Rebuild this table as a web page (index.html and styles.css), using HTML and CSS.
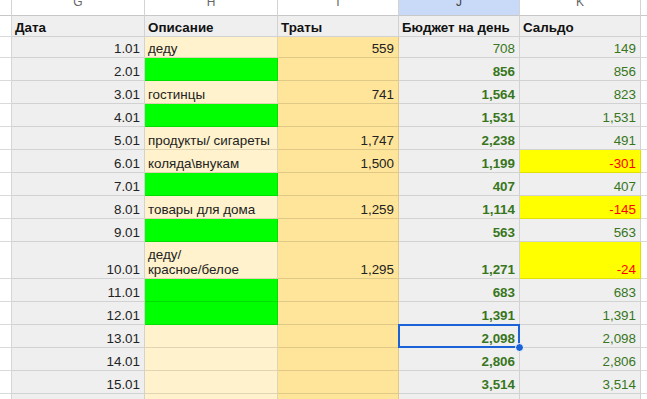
FILE: index.html
```
<!DOCTYPE html>
<html lang="ru">
<head>
<meta charset="utf-8">
<title>Бюджет</title>
<link rel="stylesheet" href="styles.css">
</head>
<body>
<div class="sheet">
  <div class="c colhead"></div>
  <div class="c colhead"><span>G</span></div>
  <div class="c colhead"><span>H</span></div>
  <div class="c colhead"><span>I</span></div>
  <div class="c colhead active"><span>J</span></div>
  <div class="c colhead"><span>K</span></div>
  <div class="c colhead end"></div>

  <div class="c edge"></div>
  <div class="c hdr">Дата</div>
  <div class="c hdr">Описание</div>
  <div class="c hdr">Траты</div>
  <div class="c hdr">Бюджет на день</div>
  <div class="c hdr">Сальдо</div>
  <div class="c edge end"></div>

  <div class="c edge"></div>
  <div class="c date">1.01</div>
  <div class="c desc">деду</div>
  <div class="c cost">559</div>
  <div class="c budget plain">708</div>
  <div class="c bal">149</div>
  <div class="c edge end"></div>

  <div class="c edge"></div>
  <div class="c date">2.01</div>
  <div class="c desc green"></div>
  <div class="c cost"></div>
  <div class="c budget">856</div>
  <div class="c bal">856</div>
  <div class="c edge end"></div>

  <div class="c edge"></div>
  <div class="c date">3.01</div>
  <div class="c desc">гостинцы</div>
  <div class="c cost">741</div>
  <div class="c budget">1,564</div>
  <div class="c bal">823</div>
  <div class="c edge end"></div>

  <div class="c edge"></div>
  <div class="c date">4.01</div>
  <div class="c desc green"></div>
  <div class="c cost"></div>
  <div class="c budget">1,531</div>
  <div class="c bal">1,531</div>
  <div class="c edge end"></div>

  <div class="c edge"></div>
  <div class="c date">5.01</div>
  <div class="c desc">продукты/ сигареты</div>
  <div class="c cost">1,747</div>
  <div class="c budget">2,238</div>
  <div class="c bal">491</div>
  <div class="c edge end"></div>

  <div class="c edge"></div>
  <div class="c date">6.01</div>
  <div class="c desc">коляда\внукам</div>
  <div class="c cost">1,500</div>
  <div class="c budget">1,199</div>
  <div class="c bal neg">-301</div>
  <div class="c edge end"></div>

  <div class="c edge"></div>
  <div class="c date">7.01</div>
  <div class="c desc green"></div>
  <div class="c cost"></div>
  <div class="c budget">407</div>
  <div class="c bal">407</div>
  <div class="c edge end"></div>

  <div class="c edge"></div>
  <div class="c date">8.01</div>
  <div class="c desc">товары для дома</div>
  <div class="c cost">1,259</div>
  <div class="c budget">1,114</div>
  <div class="c bal neg">-145</div>
  <div class="c edge end"></div>

  <div class="c edge"></div>
  <div class="c date">9.01</div>
  <div class="c desc green"></div>
  <div class="c cost"></div>
  <div class="c budget">563</div>
  <div class="c bal">563</div>
  <div class="c edge end"></div>

  <div class="c edge"></div>
  <div class="c date">10.01</div>
  <div class="c desc">деду/<br>красное/белое</div>
  <div class="c cost">1,295</div>
  <div class="c budget">1,271</div>
  <div class="c bal neg">-24</div>
  <div class="c edge end"></div>

  <div class="c edge"></div>
  <div class="c date">11.01</div>
  <div class="c desc green"></div>
  <div class="c cost"></div>
  <div class="c budget">683</div>
  <div class="c bal">683</div>
  <div class="c edge end"></div>

  <div class="c edge"></div>
  <div class="c date">12.01</div>
  <div class="c desc green"></div>
  <div class="c cost"></div>
  <div class="c budget">1,391</div>
  <div class="c bal">1,391</div>
  <div class="c edge end"></div>

  <div class="c edge"></div>
  <div class="c date">13.01</div>
  <div class="c desc"></div>
  <div class="c cost"></div>
  <div class="c budget selected">2,098<div class="selbox"></div><div class="handle"></div></div>
  <div class="c bal">2,098</div>
  <div class="c edge end"></div>

  <div class="c edge"></div>
  <div class="c date">14.01</div>
  <div class="c desc"></div>
  <div class="c cost"></div>
  <div class="c budget">2,806</div>
  <div class="c bal">2,806</div>
  <div class="c edge end"></div>

  <div class="c edge"></div>
  <div class="c date">15.01</div>
  <div class="c desc"></div>
  <div class="c cost"></div>
  <div class="c budget">3,514</div>
  <div class="c bal">3,514</div>
  <div class="c edge end"></div>

  <div class="c edge"></div>
  <div class="c date"></div>
  <div class="c desc"></div>
  <div class="c cost"></div>
  <div class="c budget"></div>
  <div class="c bal"></div>
  <div class="c edge end"></div>
</div>
</body>
</html>
```

FILE: styles.css
```
html, body {
  margin: 0;
  padding: 0;
  background: #ffffff;
  overflow: hidden;
}

.sheet {
  width: 647px;
  height: 399px;
  overflow: hidden;
  display: grid;
  grid-template-columns: 12px 133px 133px 121px 121px 121px 6px;
  grid-template-rows: 16px 21px 21px repeat(8, 23px) 37px repeat(5, 23px);
  grid-auto-rows: 23px;
  font-family: "Liberation Sans", Arial, sans-serif;
  font-size: 13.4px;
  line-height: 15px;
  color: #222222;
}

.c {
  box-sizing: border-box;
  border-right: 1px solid rgba(0, 0, 0, 0.12);
  border-bottom: 1px solid rgba(0, 0, 0, 0.12);
  display: flex;
  align-items: flex-end;
  padding: 0 4px 1px 3px;
  white-space: nowrap;
  overflow: visible;
  min-width: 0;
}

.end {
  border-right: none;
}

.colhead {
  background: #ffffff;
  border-right-color: #d4d4d4;
  border-bottom-color: #c8c8c8;
  justify-content: center;
  align-items: flex-start;
  overflow: hidden;
  font-size: 12px;
  color: #666666;
  padding: 0;
}

.colhead span {
  margin-top: -5px;
}

.colhead.active {
  background: #c9daf8;
  color: #444444;
}

.edge {
  background: #ffffff;
  border-right-color: #d6d6d6;
  border-bottom-color: #dadada;
}

.hdr {
  background: #efefef;
  font-weight: bold;
  color: #111111;
  padding-left: 3px;
}

.date {
  background: #efefef;
  justify-content: flex-end;
}

.desc {
  background: #fff2cc;
  padding-left: 3px;
  white-space: normal;
}

.desc.green {
  background: #00ff00;
}

.cost {
  background: #ffe599;
  justify-content: flex-end;
}

.budget {
  background: #efefef;
  justify-content: flex-end;
  color: #38761d;
  font-weight: bold;
}

.budget.plain {
  font-weight: normal;
}

.bal {
  background: #efefef;
  justify-content: flex-end;
  color: #38761d;
}

.bal.neg {
  background: #ffff00;
  color: #ff0000;
}

.selected {
  position: relative;
}

.selbox {
  position: absolute;
  left: -1px;
  top: -1px;
  right: -1px;
  bottom: -1px;
  border: 2px solid #1a62d6;
  pointer-events: none;
}

.handle {
  position: absolute;
  right: -5px;
  bottom: -5px;
  width: 7px;
  height: 7px;
  border-radius: 50%;
  background: #1a62d6;
  border: 1px solid #ffffff;
  z-index: 2;
}
```
